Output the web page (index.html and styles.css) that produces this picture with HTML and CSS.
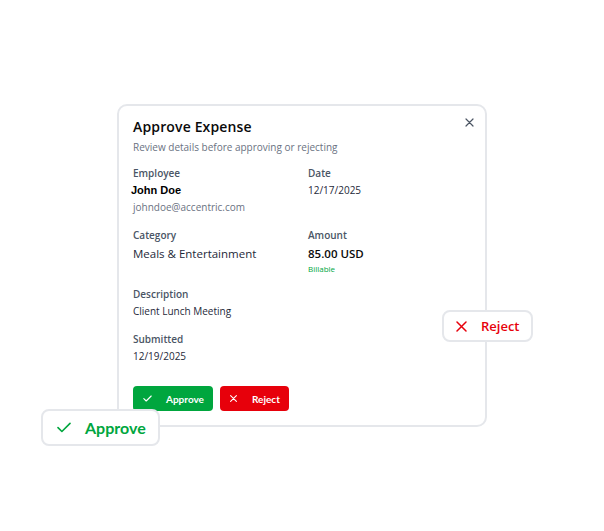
FILE: index.html
```html
<!DOCTYPE html>
<html>
<head>
<meta charset="utf-8">
<link rel="stylesheet" href="styles.css">
</head>
<body>
<div class="stage">
  <div class="card">
    <button class="close" aria-label="Close">
      <svg width="9" height="9" viewBox="0 0 9 9"><path d="M1 1L8 8M8 1L1 8" stroke="#4b5563" stroke-width="1.2" stroke-linecap="round"/></svg>
    </button>
    <h1 class="title">Approve Expense</h1>
    <p class="subtitle">Review details before approving or rejecting</p>
    <div class="grid">
      <div class="field">
        <div class="label">Employee</div>
        <div class="name">John Doe</div>
        <div class="email">johndoe@accentric.com</div>
      </div>
      <div class="field">
        <div class="label">Date</div>
        <div class="value-sm">12/17/2025</div>
      </div>
      <div class="field">
        <div class="label">Category</div>
        <div class="value-lg">Meals &amp; Entertainment</div>
      </div>
      <div class="field">
        <div class="label">Amount</div>
        <div class="value-lg amount">85.00 USD</div>
        <div class="billable">Billable</div>
      </div>
      <div class="field wide">
        <div class="label">Description</div>
        <div class="value-sm">Client Lunch Meeting</div>
      </div>
      <div class="field wide">
        <div class="label">Submitted</div>
        <div class="value-sm">12/19/2025</div>
      </div>
    </div>
    <div class="actions">
      <button class="btn btn-approve">
        <svg width="9" height="7" viewBox="0 0 9 7"><path d="M0.8 3.6L3.2 6L8.2 1" fill="none" stroke="#fff" stroke-width="1.1" stroke-linecap="round" stroke-linejoin="round"/></svg>
        <span>Approve</span>
      </button>
      <button class="btn btn-reject">
        <svg width="7" height="7" viewBox="0 0 7 7"><path d="M0.6 0.6L6.4 6.4M6.4 0.6L0.6 6.4" stroke="#fff" stroke-width="1.1" stroke-linecap="round"/></svg>
        <span>Reject</span>
      </button>
    </div>
  </div>

  <div class="badge badge-reject">
    <svg width="11" height="11" viewBox="0 0 11 11"><path d="M1 1L10 10M10 1L1 10" stroke="#e7000b" stroke-width="1.5" stroke-linecap="round"/></svg>
    <span>Reject</span>
  </div>
  <div class="badge badge-approve">
    <svg width="14" height="11" viewBox="0 0 14 11"><path d="M1 5.6L4.9 9.5L13 1.4" fill="none" stroke="#00a63e" stroke-width="1.6" stroke-linecap="round" stroke-linejoin="round"/></svg>
    <span>Approve</span>
  </div>
</div>
</body>
</html>
```

FILE: styles.css
```css
* { box-sizing: border-box; }

html, body {
  margin: 0;
  padding: 0;
  background: #ffffff;
}

body {
  font-family: "Open Sans", "Noto Sans", sans-serif;
  color: #111827;
}

.stage {
  position: relative;
  width: 604px;
  height: 531px;
  padding: 104px 0 0 117px;
}

.card {
  position: relative;
  width: 370px;
  height: 323px;
  border: 2px solid #e5e7eb;
  border-radius: 10px;
  background: #ffffff;
  padding: 11px 14px 14px 14px;
}

.close {
  position: absolute;
  top: 10px;
  right: 10px;
  width: 12px;
  height: 12px;
  padding: 0;
  border: 0;
  background: transparent;
  display: flex;
  align-items: center;
  justify-content: center;
}

.title {
  margin: 0;
  font-size: 14px;
  line-height: 20px;
  font-weight: 600;
  letter-spacing: 0.15px;
  color: #0a0a0a;
}

.subtitle {
  margin: 2px 0 0 0;
  font-size: 10px;
  line-height: 16px;
  color: #6a7282;
}

.grid {
  margin-top: 10px;
  display: grid;
  grid-template-columns: 175px 1fr;
  row-gap: 12px;
}

.wide { grid-column: 1 / 3; }

.label {
  font-size: 10px;
  line-height: 16px;
  font-weight: 600;
  color: #4a5565;
}

.name {
  font-family: "Liberation Sans", Arial, sans-serif;
  font-weight: 700;
  font-size: 11px;
  line-height: 18px;
  margin-left: -2px;
  color: #000;
}

.email {
  font-size: 10px;
  line-height: 16px;
  color: #6a7282;
}

.value-sm {
  font-size: 10px;
  line-height: 16px;
  color: #1e2939;
  margin-top: 1px;
}

.value-lg {
  font-size: 11.5px;
  line-height: 20px;
  margin-top: 1px;
  color: #1e2939;
}

.amount {
  font-weight: 600;
  color: #0a0a0a;
}

.billable {
  font-size: 8px;
  line-height: 10px;
  color: #00a63e;
}

.actions {
  margin-top: 22px;
  display: flex;
  gap: 7px;
}

.btn {
  height: 25px;
  border: 0;
  border-radius: 4px;
  display: flex;
  align-items: center;
  font-family: "Lato", sans-serif;
  font-weight: 700;
  font-size: 10px;
  color: #ffffff;
  padding: 0 0 0 10px;
}

.btn-approve {
  width: 80px;
  background: #00a63e;
  gap: 14px;
}

.btn-reject {
  width: 69px;
  background: #e7000b;
  padding-left: 10px;
  gap: 15px;
}

.badge {
  position: absolute;
  display: flex;
  align-items: center;
  background: #ffffff;
  border: 2px solid #e5e7eb;
  border-radius: 8px;
}

.badge-reject {
  left: 442px;
  top: 310px;
  width: 91px;
  height: 32px;
  padding-left: 12px;
  gap: 14px;
  font-family: "Open Sans", sans-serif;
  font-weight: 600;
  font-size: 13px;
  color: #e7000b;
}

.badge-approve {
  left: 41px;
  top: 409px;
  width: 119px;
  height: 37px;
  padding-left: 14px;
  gap: 14px;
  font-family: "Lato", sans-serif;
  font-weight: 700;
  font-size: 16px;
  color: #00a63e;
}
```
